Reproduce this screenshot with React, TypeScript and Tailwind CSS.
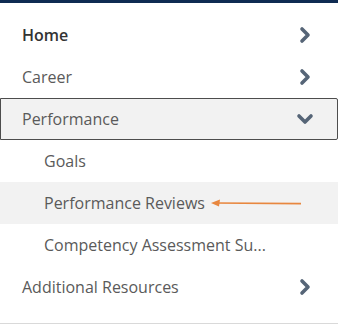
const font = { fontFamily: '"Open Sans", "Noto Sans", sans-serif' };

function Chevron({ down }: { down?: boolean }) {
  return (
    <svg width="18" height="18" viewBox="0 0 18 18" className="text-[#566577]">
      {down ? (
        <path d="M3 6 L9 12 L15 6" fill="none" stroke="currentColor" strokeWidth="3.6" strokeLinecap="round" strokeLinejoin="round" />
      ) : (
        <path d="M6 3 L12 9 L6 15" fill="none" stroke="currentColor" strokeWidth="3.6" strokeLinecap="round" strokeLinejoin="round" />
      )}
    </svg>
  );
}

export default function App() {
  return (
    <div className="w-[338px] h-[325px] bg-white text-[16px] text-[#5a5a5a]" style={font}>
      {/* top bar */}
      <div className="h-[3px] bg-[#0f2b52]" />
      <div className="pt-[11px] pb-[15px] border-b border-[#d9d9d9]">
        <div className="h-[42px] flex items-center justify-between pl-[22px] pr-[24px]">
          <span className="font-semibold text-[#333]">Home</span>
          <Chevron />
        </div>
        <div className="h-[42px] flex items-center justify-between pl-[22px] pr-[24px]">
          <span>Career</span>
          <Chevron />
        </div>
        <div className="h-[42px] flex items-center justify-between pl-[21px] pr-[23px] bg-[#f2f2f2] border border-[#4d4d4d] rounded-r-[2px]">
          <span>Performance</span>
          <Chevron down />
        </div>
        <div className="h-[42px] flex items-center pl-[44px]">
          <span>Goals</span>
        </div>
        <div className="h-[42px] flex items-center pl-[44px] bg-[#f2f2f2]">
          <span>Performance Reviews</span>
          <svg width="92" height="8" viewBox="0 0 92 8" className="ml-[6px]">
            <path d="M3 4 L90 4.6" stroke="#e8873f" strokeWidth="1.6" />
            <path d="M0 4 L9 0.5 L8 7.5 Z" fill="#e8873f" />
          </svg>
        </div>
        <div className="h-[42px] flex items-center pl-[44px]">
          <span>Competency Assessment Su...</span>
        </div>
        <div className="h-[42px] flex items-center justify-between pl-[22px] pr-[24px]">
          <span>Additional Resources</span>
          <Chevron />
        </div>
      </div>
    </div>
  );
}
